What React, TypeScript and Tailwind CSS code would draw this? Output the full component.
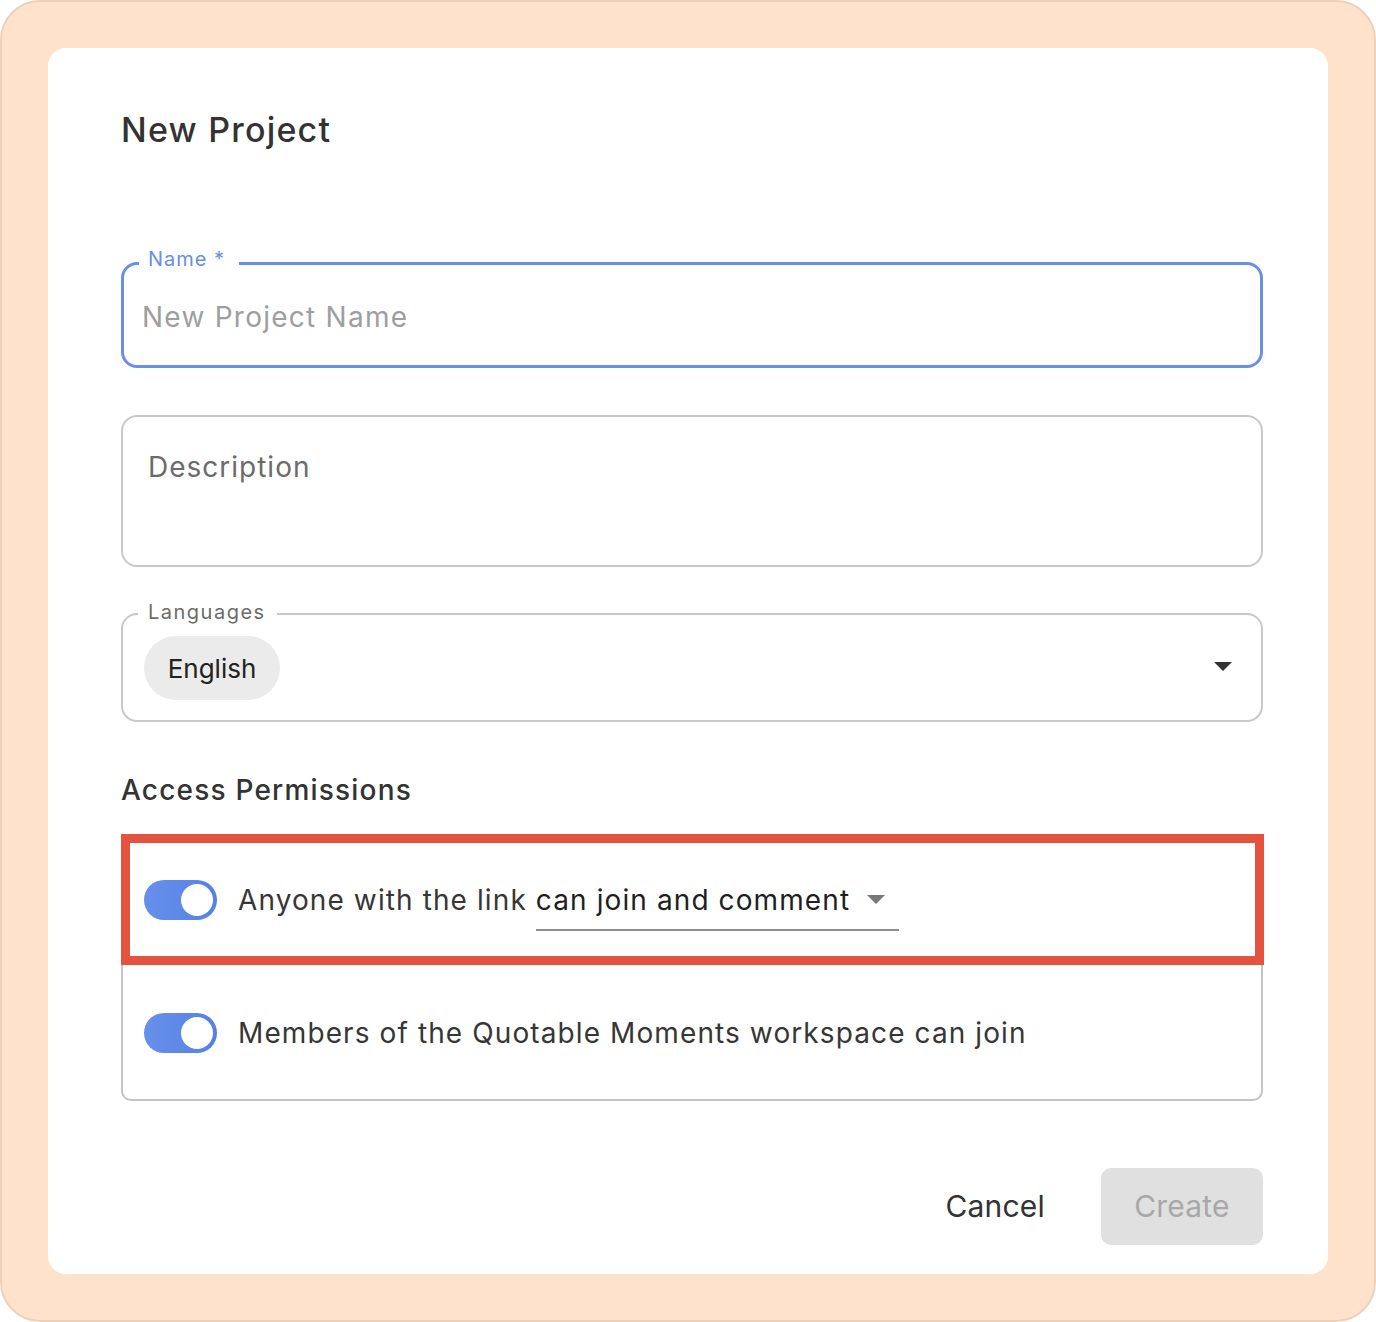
import React from 'react'

const Toggle: React.FC = () => (
    <div className="w-[73px] h-[40px] rounded-full bg-gradient-to-r from-[#6690ea] to-[#5581e4] flex items-center justify-end pr-[4px] shrink-0">
        <div className="w-[32px] h-[32px] rounded-full bg-white" />
    </div>
)

const Caret: React.FC<{ className?: string }> = ({ className }) => (
    <svg width="18" height="9" viewBox="0 0 18 9" className={className}>
        <polygon points="0,0 18,0 9,9" fill="currentColor" />
    </svg>
)

export default function App() {
    return (
        <div className="w-[1376px] h-[1322px] bg-white" style={{ fontFamily: 'Inter, "Noto Sans", sans-serif' }}>
            <div className="w-full h-full rounded-[40px] bg-[#fee2cc] border-2 border-[#ecd0ba] p-[46px]">
                <div className="bg-white rounded-[18px] pl-[73px] pr-[65px] pt-[62px] pb-[29px] flex flex-col">
                    {/* Title */}
                    <h1 className="text-[34px] leading-[40px] font-medium text-[#333333] tracking-[1.2px]">New Project</h1>

                    {/* Name */}
                    <div className="relative mt-[112px] h-[106px] border-[3px] border-[#6990e5] rounded-[16px] flex items-center pl-[18px] pt-[3px]">
                        <span className="absolute left-[15px] -top-[18px] bg-white pl-[9px] pr-[14px] text-[20px] leading-[24px] text-[#6690e3] tracking-[1px]">
                            Name *
                        </span>
                        <span className="text-[28px] leading-[34px] text-[#9e9e9e] tracking-[1.25px]">New Project Name</span>
                    </div>

                    {/* Description */}
                    <div className="mt-[47px] h-[152px] border-2 border-[#c8c8c8] rounded-[16px] pl-[25px] pt-[34px]">
                        <span className="text-[28px] leading-[32px] text-[#6b6b6b] tracking-[1px]">Description</span>
                    </div>

                    {/* Languages */}
                    <div className="relative mt-[46px] h-[109px] border-2 border-[#c8c8c8] rounded-[16px] flex items-center pl-[21px] pr-[29px]">
                        <span className="absolute left-[15px] -top-[15px] bg-white pl-[10px] pr-[11px] text-[20px] leading-[24px] text-[#6b6b6b] tracking-[1.5px]">
                            Languages
                        </span>
                        <div className="h-[64px] mt-[1px] rounded-full bg-[#ebebeb] px-[24px] flex items-center text-[26px] text-[#222222] tracking-[0px] w-[136px] justify-center">
                            English
                        </div>
                        <div className="flex-1" />
                        <Caret className="text-[#333333] mt-[-2px]" />
                    </div>

                    {/* Access permissions */}
                    <h2 className="mt-[52px] text-[28px] leading-[32px] font-medium text-[#333333] tracking-[1.2px]">Access Permissions</h2>

                    <div className="mt-[28px] flex flex-col">
                        <div className="h-[131px] border-[9px] border-[#e5533f] flex items-center pl-[14px] -mr-[1px]">
                            <Toggle />
                            <span className="ml-[21px] text-[28px] leading-[34px] text-[#363636] tracking-[1.1px]">Anyone with the link</span>
                            <div className="ml-[9px] mt-[31px] h-[32px] border-b-2 border-[#8c8c8c] flex items-start pr-[14px] w-[363px]">
                                <span className="text-[28px] leading-[34px] text-[#1f1f1f] tracking-[1.1px] -mt-[16px]">can join and comment</span>
                                <div className="flex-1" />
                                <Caret className="text-[#777777] -mt-[4px]" />
                            </div>
                        </div>
                        <div className="h-[136px] border-x-2 border-b-2 border-[#c4c4c4] rounded-b-[10px] flex items-center pl-[21px] pt-[2px]">
                            <Toggle />
                            <span className="ml-[21px] text-[28px] leading-[34px] text-[#363636] tracking-[1.1px]">
                                Members of the Quotable Moments workspace can join
                            </span>
                        </div>
                    </div>

                    {/* Actions */}
                    <div className="mt-[67px] flex items-center justify-end">
                        <button className="text-[30px] text-[#333333] mr-[56px] tracking-[0.2px]">Cancel</button>
                        <button className="w-[162px] h-[77px] rounded-[10px] bg-[#e0e0e0] text-[30px] text-[#a8a8a8] tracking-[0.2px]">
                            Create
                        </button>
                    </div>
                </div>
            </div>
        </div>
    )
}
